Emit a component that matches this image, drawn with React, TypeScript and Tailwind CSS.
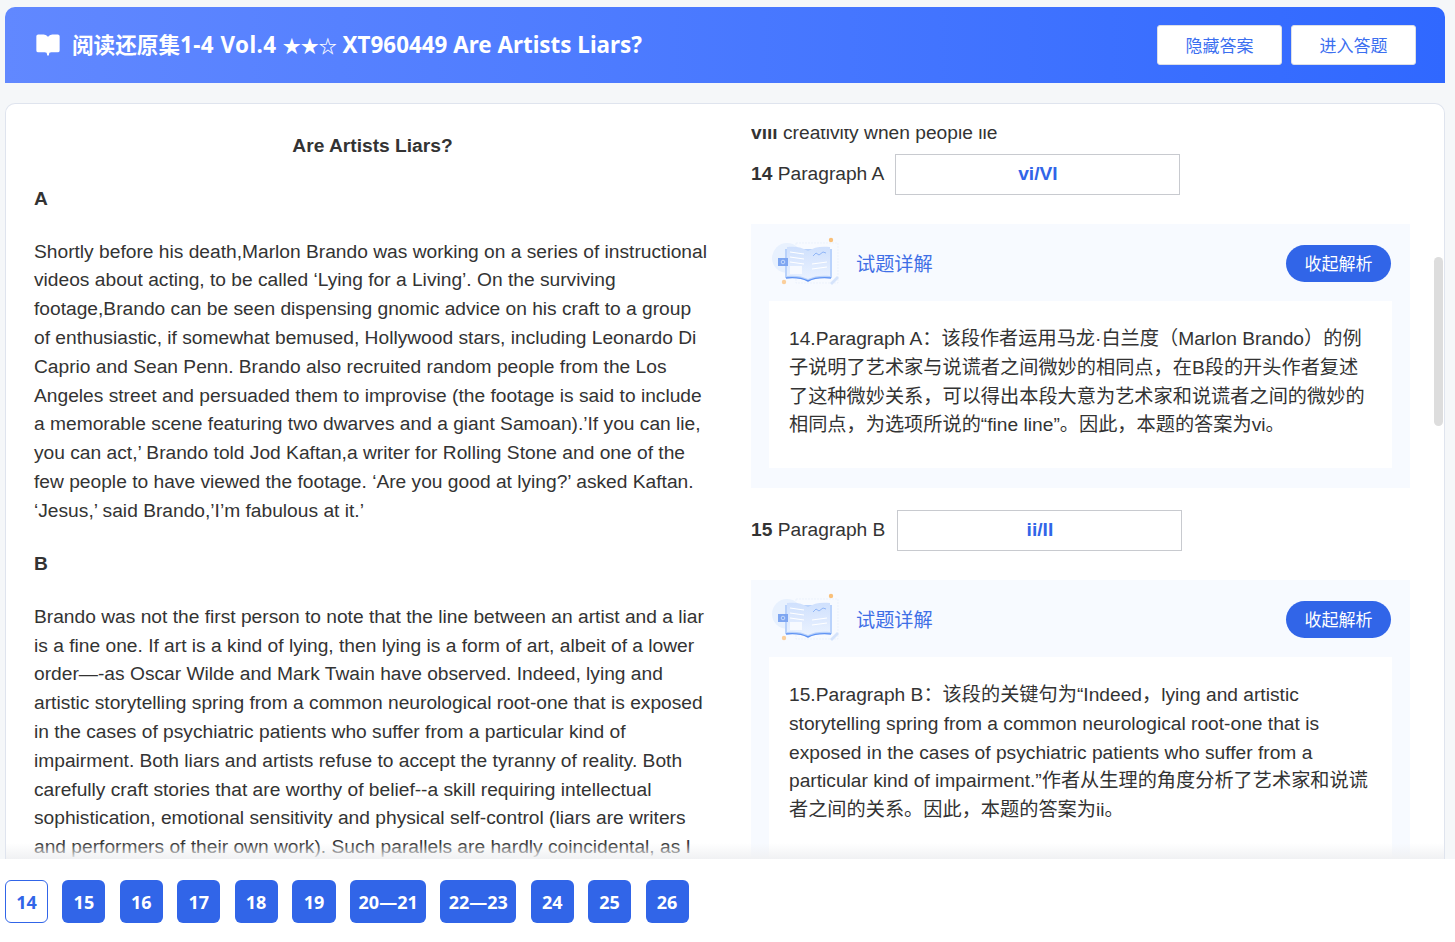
import { BookOpen } from "lucide-react";

const cjk = "font-['Liberation_Sans','Noto_Sans_CJK_SC',sans-serif]";
const yahei = "font-['Noto_Sans','Noto_Sans_CJK_SC',sans-serif]";

const navItems = [
  { label: "14", w: "w-[43px]", active: true },
  { label: "15", w: "w-[43px]" },
  { label: "16", w: "w-[43px]" },
  { label: "17", w: "w-[43px]" },
  { label: "18", w: "w-[43px]" },
  { label: "19", w: "w-[44px]" },
  { label: "20—21", w: "w-[75.6px]" },
  { label: "22—23", w: "w-[76px]" },
  { label: "24", w: "w-[43px]" },
  { label: "25", w: "w-[43px]" },
  { label: "26", w: "w-[43px]" },
];

function BookArt() {
  return (
    <svg width="70" height="52" viewBox="0 0 70 52" className="shrink-0">
      <defs>
        <linearGradient id="page" x1="0" y1="0" x2="0" y2="1">
          <stop offset="0" stopColor="#cfe0fd" />
          <stop offset="1" stopColor="#eaf2ff" />
        </linearGradient>
      </defs>
      <circle cx="15" cy="21" r="15" fill="#e8f1fe" />
      <circle cx="48" cy="28" r="12" fill="#eef4ff" />
      <rect x="24" y="6" width="42" height="40" fill="none" stroke="#e6eefb" strokeWidth="0.7" strokeDasharray="2 1" />
      <path d="M13 12v29c9-1 17 0 23 3 6-3 14-4 24-3V12" fill="#b9d2fb" />
      <path d="M15 10c8-1 15 0 21 4v28c-6-3-13-4-21-3z" fill="url(#page)" />
      <path d="M36 14c6-4 13-5 22-4v29c-9-1-16 0-22 3z" fill="url(#page)" />
      <path d="M14 41c9-1 16 0 22 3 6-3 13-4 23-3" fill="none" stroke="#5f93f4" strokeWidth="1.4" />
      <path d="M18 15l14 2M18 20l14 2M18 25l14 2" stroke="#fff" strokeWidth="1.1" />
      <rect x="18" y="29" width="12" height="8" fill="#f7faff" />
      <rect x="6" y="21" width="10" height="8" fill="#7ea6f1" />
      <circle cx="11" cy="25" r="1.8" fill="none" stroke="#d6e5fd" strokeWidth="0.8" />
      <path d="M41 19l3-3 3 2 4-3 3 1" fill="none" stroke="#7fa9f5" strokeWidth="0.8" />
      <path d="M40 27l15-2M40 32l15-2" stroke="#fff" strokeWidth="1.1" />
      <path d="M58 46l7-7 2 2-7 7z" fill="#d5e3fb" />
      <circle cx="59" cy="3" r="2.2" fill="#f9c07a" />
      <circle cx="12" cy="45" r="2.2" fill="#fbcf9c" />
    </svg>
  );
}

function Explain({ children, h }: { children: React.ReactNode; h: string }) {
  return (
    <div className="bg-[#f7faff] px-[18px] pt-[12px] pb-[20px]">
      <div className="flex items-center justify-between pr-[1px] h-[54px]">
        <div className="flex items-center gap-[14px] ml-[3px]">
          <BookArt />
          <span className={`${cjk} pt-[4px] text-[19.2px] text-[#3f6fe6]`}>试题详解</span>
        </div>
        <button className={`${cjk} w-[105px] h-[37px] pt-[4px] rounded-full bg-[#3165e8] text-[17px] text-white`}>收起解析</button>
      </div>
      <div className={`mt-[11px] bg-white px-[20px] pt-[24px] ${h} text-[19.2px] leading-[28.8px] text-[#333]`}>{children}</div>
    </div>
  );
}

export default function App() {
  return (
    <div className={`${cjk} h-[942px] overflow-hidden flex flex-col bg-[#f5f7f9] text-[#333]`}>
      <div className="ml-[5px] mr-[10px] mt-[7px] h-[76px] shrink-0 rounded-t-[10px] bg-gradient-to-r from-[#6188ff] to-[#3068ff] flex items-center justify-between pl-[30px] pr-[29px]">
        <div className={`${yahei} flex items-center gap-[11px] text-[22.4px] font-bold text-white`}>
          <BookOpen size={26} fill="#fff" strokeWidth={1.5} />
          <span>
            <span className="text-[21.6px]">阅读还原集</span>
            <span className="tracking-[0.45px]">1-4 Vol.4 </span>
            <span className="text-[18px]">★★☆</span> XT960449 Are Artists Liars?
          </span>
        </div>
        <div className="flex gap-[9px]">
          <button className="w-[125px] h-[40px] pt-[3px] rounded-[3px] bg-white border border-[#dcdfe6] text-[17px] text-[#3c6ff0]">隐藏答案</button>
          <button className="w-[125px] h-[40px] pt-[3px] rounded-[3px] bg-white border border-[#dcdfe6] text-[17px] text-[#3c6ff0]">进入答题</button>
        </div>
      </div>

      <div className="relative ml-[5px] mr-[10px] mt-[20px] flex-1 min-h-0 overflow-hidden rounded-t-[10px] border border-b-0 border-[#dfe4ee] bg-white flex">
        <div className="w-[703px] shrink-0 pl-[28px] pt-[28px] text-[19.2px] leading-[28.8px]">
          <h2 className="text-center font-bold pl-[2px]">Are Artists Liars?</h2>
          <p className="mt-[24px] font-bold">A</p>
          <p className="mt-[24px]">
            Shortly before his death,Marlon Brando was working on a series of instructional videos about acting, to be called ‘Lying for a Living’. On the surviving footage,Brando can be seen dispensing gnomic advice on his craft to a group of enthusiastic, if somewhat bemused, Hollywood stars, including Leonardo Di Caprio and Sean Penn. Brando also recruited random people from the Los Angeles street and persuaded them to improvise (the footage is said to include a memorable scene featuring two dwarves and a giant Samoan).’If you can lie, you can act,’ Brando told Jod Kaftan,a writer for Rolling Stone and one of the few people to have viewed the footage. ‘Are you good at lying?’ asked Kaftan. ‘Jesus,’ said Brando,’I’m fabulous at it.’
          </p>
          <p className="mt-[24px] font-bold">B</p>
          <p className="mt-[24.4px]">
            Brando was not the first person to note that the line between an artist and a liar is a fine one. If art is a kind of lying, then lying is a form of art, albeit of a lower order—-as Oscar Wilde and Mark Twain have observed. Indeed, lying and artistic storytelling spring from a common neurological root-one that is exposed in the cases of psychiatric patients who suffer from a particular kind of impairment. Both liars and artists refuse to accept the tyranny of reality. Both carefully craft stories that are worthy of belief--a skill requiring intellectual sophistication, emotional sensitivity and physical self-control (liars are writers and performers of their own work). Such parallels are hardly coincidental, as I
          </p>
        </div>

        <div className="ml-[42px] w-[659px] shrink-0 mt-[25px] overflow-hidden text-[19.2px]">
          <p className="-mt-[9px] h-[25px] leading-[25px] text-[#333]"><b>viii</b> creativity when people lie</p>
          <div className="mt-[9px] flex items-center gap-[11px]">
            <span><b>14</b> Paragraph A</span>
            <div className="w-[285px] h-[41px] border border-[#c8cacf] flex items-center justify-center font-bold text-[#3165e8]">vi/VI</div>
          </div>
          <div className="mt-[29px]">
            <Explain h="h-[167px]">
              14.Paragraph A：该段作者运用马龙·白兰度（Marlon Brando）的例子说明了艺术家与说谎者之间微妙的相同点，在B段的开头作者复述了这种微妙关系，可以得出本段大意为艺术家和说谎者之间的微妙的相同点，为选项所说的“fine line”。因此，本题的答案为vi。
            </Explain>
          </div>
          <div className="mt-[22px] flex items-center gap-[12px]">
            <span><b>15</b> Paragraph B</span>
            <div className="w-[285px] h-[41px] border border-[#c8cacf] flex items-center justify-center font-bold text-[#3165e8]">ii/II</div>
          </div>
          <div className="mt-[29px]">
            <Explain h="h-[220px]">
              15.Paragraph B：该段的关键句为“Indeed，lying and artistic storytelling spring from a common neurological root-one that is exposed in the cases of psychiatric patients who suffer from a particular kind of impairment.”作者从生理的角度分析了艺术家和说谎者之间的关系。因此，本题的答案为ii。
            </Explain>
          </div>
        </div>

        <div className="absolute right-[1px] top-[153px] h-[169px] w-[9px] rounded-full bg-[#dddddd]" />
        <div className="absolute inset-x-0 bottom-0 h-[16px] bg-gradient-to-b from-transparent to-[#f0f1f3]" />
      </div>

      <div className={`${yahei} h-[83px] shrink-0 bg-white flex items-start gap-[14.4px] pl-[5px] pt-[21px]`}>
        {navItems.map((item) => (
          <button
            key={item.label}
            className={
              item.active
                ? `${item.w} h-[43px] pt-[2px] rounded-[6px] border border-[#3165e8] bg-white text-[18px] font-bold text-[#3165e8]`
                : `${item.w} h-[43px] pt-[2px] rounded-[6px] bg-[#3165e8] text-[18px] font-bold text-white`
            }
          >
            {item.label}
          </button>
        ))}
      </div>
    </div>
  );
}
